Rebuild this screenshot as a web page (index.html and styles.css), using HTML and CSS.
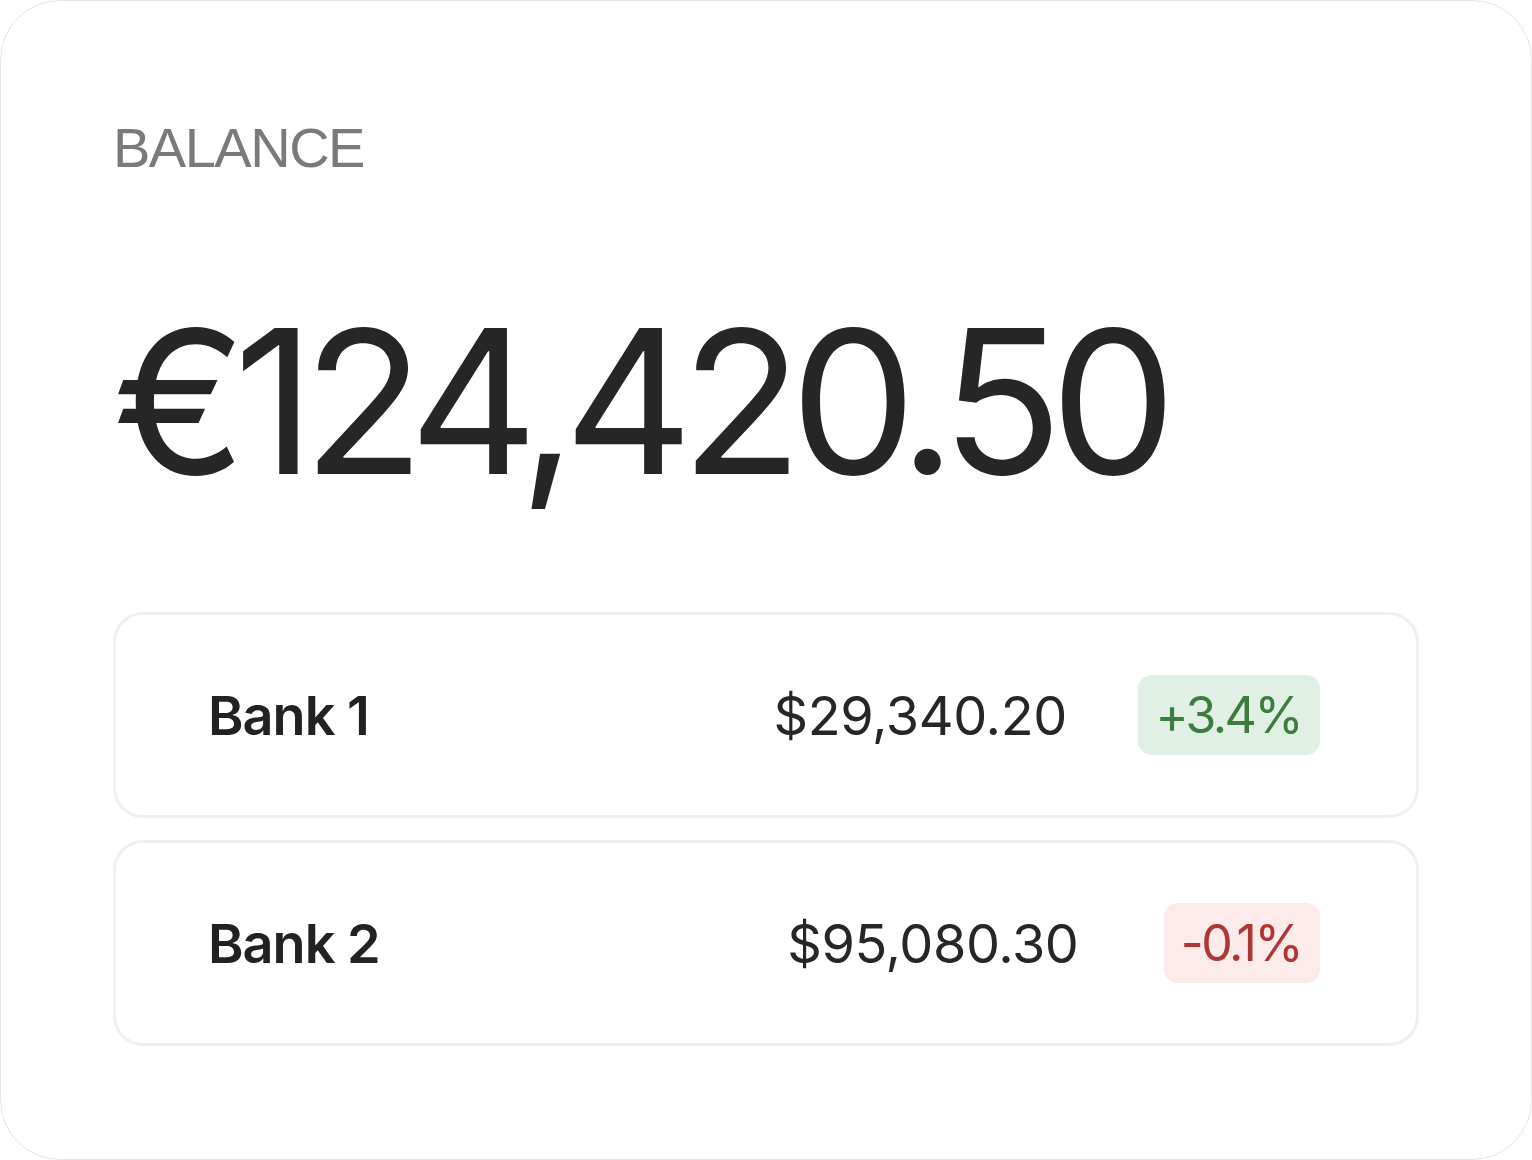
FILE: index.html
```html
<!DOCTYPE html>
<html lang="en">
<head>
<meta charset="utf-8">
<title>Balance</title>
<link rel="stylesheet" href="styles.css">
</head>
<body>
<main class="card">
  <div class="label">BALANCE</div>
  <div class="total">€124,420.50</div>
  <ul class="accounts">
    <li class="account">
      <span class="account-name">Bank 1</span>
      <span class="account-amount">$29,340.20</span>
      <span class="badge badge-up">+3.4%</span>
    </li>
    <li class="account">
      <span class="account-name">Bank 2</span>
      <span class="account-amount">$95,080.30</span>
      <span class="badge badge-down">-0.1%</span>
    </li>
  </ul>
</main>
</body>
</html>
```

FILE: styles.css
```css
html, body {
  margin: 0;
  padding: 0;
  background: #ffffff;
}

* {
  box-sizing: border-box;
}

.card {
  width: 1532px;
  height: 1160px;
  border: 1px solid #e6e6e6;
  border-radius: 60px;
  background: #ffffff;
  padding: 119px 112px 0 112px;
  font-family: Inter, "Noto Sans", sans-serif;
  color: #262626;
}

.label {
  font-family: "Liberation Sans", Arial, sans-serif;
  font-size: 56px;
  line-height: 56px;
  letter-spacing: -1.5px;
  color: #7a7a7a;
}

.total {
  margin-top: 125px;
  font-size: 200px;
  line-height: 200px;
  font-weight: 400;
  letter-spacing: -12.5px;
  color: #262626;
}

.accounts {
  list-style: none;
  margin: 111px 0 0 0;
  padding: 0;
  display: flex;
  flex-direction: column;
  gap: 22px;
}

.account {
  height: 206px;
  border: 3px solid #f0f0f0;
  border-radius: 30px;
  display: flex;
  align-items: center;
  padding: 0 96px 0 92px;
}

.account-name {
  width: 494px;
  flex: none;
  font-size: 54px;
  font-weight: 600;
  letter-spacing: -1px;
  color: #222222;
}

.account-amount {
  flex: 1;
  text-align: center;
  font-size: 54px;
  font-weight: 400;
  letter-spacing: -0.4px;
  color: #262626;
}

.badge {
  flex: none;
  height: 80px;
  border-radius: 14px;
  padding: 0 19px 0 17px;
  display: flex;
  align-items: center;
  font-size: 50px;
  font-weight: 400;
  letter-spacing: -2.5px;
}

.badge-up {
  background: #e1f0e4;
  color: #3a7d3c;
}

.badge-down {
  background: #fcebea;
  color: #b03535;
}
```
